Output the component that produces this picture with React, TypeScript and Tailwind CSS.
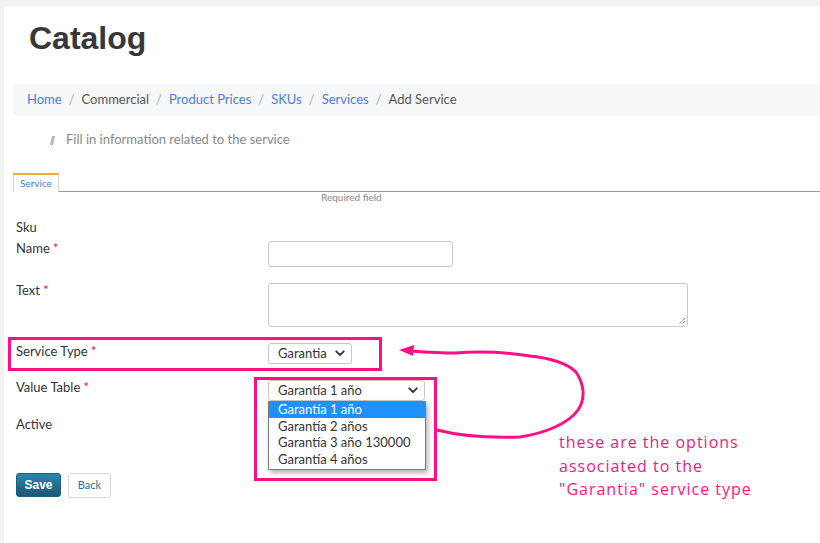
import React from "react";

const ui = { fontFamily: "Lato, 'Open Sans', sans-serif" };

function Chevron() {
  return (
    <svg width="10" height="7" viewBox="0 0 10 7" className="shrink-0">
      <path d="M1.2 1.3 L5 5 L8.8 1.3" fill="none" stroke="#333" strokeWidth="1.8" strokeLinecap="round" strokeLinejoin="round" />
    </svg>
  );
}

function Label({ text, req }: { text: string; req?: boolean }) {
  return (
    <div className="w-[252px] shrink-0 text-[13px] leading-[20px] text-[#333]">
      {text}
      {req && <span className="text-[#e8202a]"> *</span>}
    </div>
  );
}

export default function App() {
  return (
    <div className="min-h-[543px] bg-[#f3f3f3] pl-1 pt-1.5" style={ui}>
      <div className="relative min-h-[537px] bg-white">
        <h1
          className="pl-[25px] pt-[15px] text-[32px] font-bold leading-[34px] text-[#383838]"
          style={{ fontFamily: "'Liberation Sans', Arial, sans-serif" }}
        >
          Catalog
        </h1>

        <nav className="ml-[9px] mt-[29px] flex h-[31px] items-center bg-[#f6f7f9] pl-[14px] text-[13px] text-[#555]">
          <span className="text-[#4a7ce8]">Home</span>
          <span className="px-[7px] text-[#aaa]">/</span>
          <span>Commercial</span>
          <span className="px-[7px] text-[#aaa]">/</span>
          <span className="text-[#4a7ce8]">Product Prices</span>
          <span className="px-[7px] text-[#aaa]">/</span>
          <span className="text-[#4a7ce8]">SKUs</span>
          <span className="px-[7px] text-[#aaa]">/</span>
          <span className="text-[#4a7ce8]">Services</span>
          <span className="px-[7px] text-[#aaa]">/</span>
          <span>Add Service</span>
        </nav>

        <div className="ml-[47px] mt-[15px] flex h-[20px] items-center gap-[12px] text-[13px] text-[#888]">
          <span className="inline-block h-[9px] w-[3px] skew-x-[-14deg] bg-[#b5b5b5]" />
          <span>Fill in information related to the service</span>
        </div>

        <div className="ml-[9px] mt-[23px] flex items-end border-b border-[#8f9c97]">
          <div className="-mb-px flex h-[19px] items-center border-x border-t-2 border-x-[#d3d3d3] border-t-[#f0a830] bg-white px-[6px] text-[10px] text-[#3a7fd5]">
            Service
          </div>
        </div>
        <div className="ml-[317px] -mt-[1px] text-[10px] leading-[13px] text-[#888]">Required field</div>

        <div className="ml-[12px] mt-[13px] flex flex-col">
          <div className="flex">
            <Label text="Sku" />
          </div>
          <div className="mt-[1px] flex items-start">
            <Label text="Name" req />
            <div className="mt-[3px] h-[26px] w-[185px] rounded-[3px] border border-[#c9c9c9] bg-white" />
          </div>
          <div className="mt-[13px] flex items-start">
            <Label text="Text" req />
            <div className="relative mt-[3px] h-[44px] w-[420px] rounded-[3px] border border-[#c9c9c9] bg-white">
              <svg className="absolute bottom-[1px] right-[1px]" width="9" height="9" viewBox="0 0 9 9">
                <path d="M8 2 L2 8 M8 5 L5 8" stroke="#555" strokeWidth="1" strokeDasharray="1 1" />
              </svg>
            </div>
          </div>
          <div className="mt-[14px] flex items-start">
            <Label text="Service Type" req />
            <div className="mt-[2px] flex h-[21px] w-[84px] items-center justify-between rounded-[3px] border border-[#c9c9c9] bg-white pl-[9px] pr-[6px] text-[13px] text-[#333]">
              <span>Garantia</span>
              <Chevron />
            </div>
          </div>
          <div className="mt-[13px] flex items-start">
            <Label text="Value Table" req />
            <div className="relative mt-[3px]">
              <div className="flex h-[21px] w-[157px] items-center justify-between rounded-[3px] border border-[#c9c9c9] bg-white pl-[9px] pr-[6px] text-[13px] text-[#333]">
                <span>Garantía 1 año</span>
                <Chevron />
              </div>
              <div className="absolute left-0 top-[21px] z-10 w-[158px] border border-[#7a7a7a] bg-white pb-[2px] text-[13px] leading-[16.5px] text-[#333] shadow-[2px_3px_5px_rgba(0,0,0,0.3)]">
                <div className="bg-[#1e90ff] pl-[9px] leading-[15.5px] text-white">Garantía 1 año</div>
                <div className="pl-[9px]">Garantía 2 años</div>
                <div className="pl-[9px]">Garantía 3 año 130000</div>
                <div className="pl-[9px]">Garantía 4 años</div>
              </div>
            </div>
          </div>
          <div className="mt-[13px] flex">
            <Label text="Active" />
          </div>
          <div className="mt-[39px] flex gap-[7px]">
            <button
              className="h-[24px] w-[45px] rounded-[3px] border border-[#1f5f7e] bg-gradient-to-b from-[#2e86ad] to-[#1b5575] text-[12px] font-bold text-white"
              style={{ fontFamily: "'Liberation Sans', Arial, sans-serif" }}
            >
              Save
            </button>
            <button className="h-[25px] w-[43px] rounded-[3px] border border-[#d6d6d6] bg-white text-[11px] text-[#2f6e9a]">
              Back
            </button>
          </div>
        </div>

        {/* annotations */}
        <div className="pointer-events-none absolute left-[4px] top-[331px] h-[34px] w-[374px] border-[3px] border-[#fe0f85]" />
        <div className="pointer-events-none absolute left-[250px] top-[371px] h-[104px] w-[183px] border-[3px] border-[#fe0f85]" />
        <svg className="pointer-events-none absolute left-0 top-0" width="816" height="537" viewBox="4 6 816 537">
          <path
            d="M437 430 C460 436 490 438 520 437 C545 433 568 424 578 410 C586 398 584 384 576 372 C566 362 548 358 530 356 C505 352 480 351 455 353 C440 353 425 352 410 351"
            fill="none"
            stroke="#fe0f85"
            strokeWidth="3"
            strokeLinecap="round"
          />
          <path d="M399 350 L414 345 L413 356 Z" fill="#fe0f85" />
        </svg>
        <div
          className="pointer-events-none absolute left-[555px] top-[425px] text-[16px] leading-[23.5px] tracking-[1px] text-[#f8167f]"
          style={{ fontFamily: "'Open Sans', sans-serif" }}
        >
          <div>these are the options</div>
          <div>associated to the</div>
          <div>"Garantia" service type</div>
        </div>
      </div>
    </div>
  );
}
